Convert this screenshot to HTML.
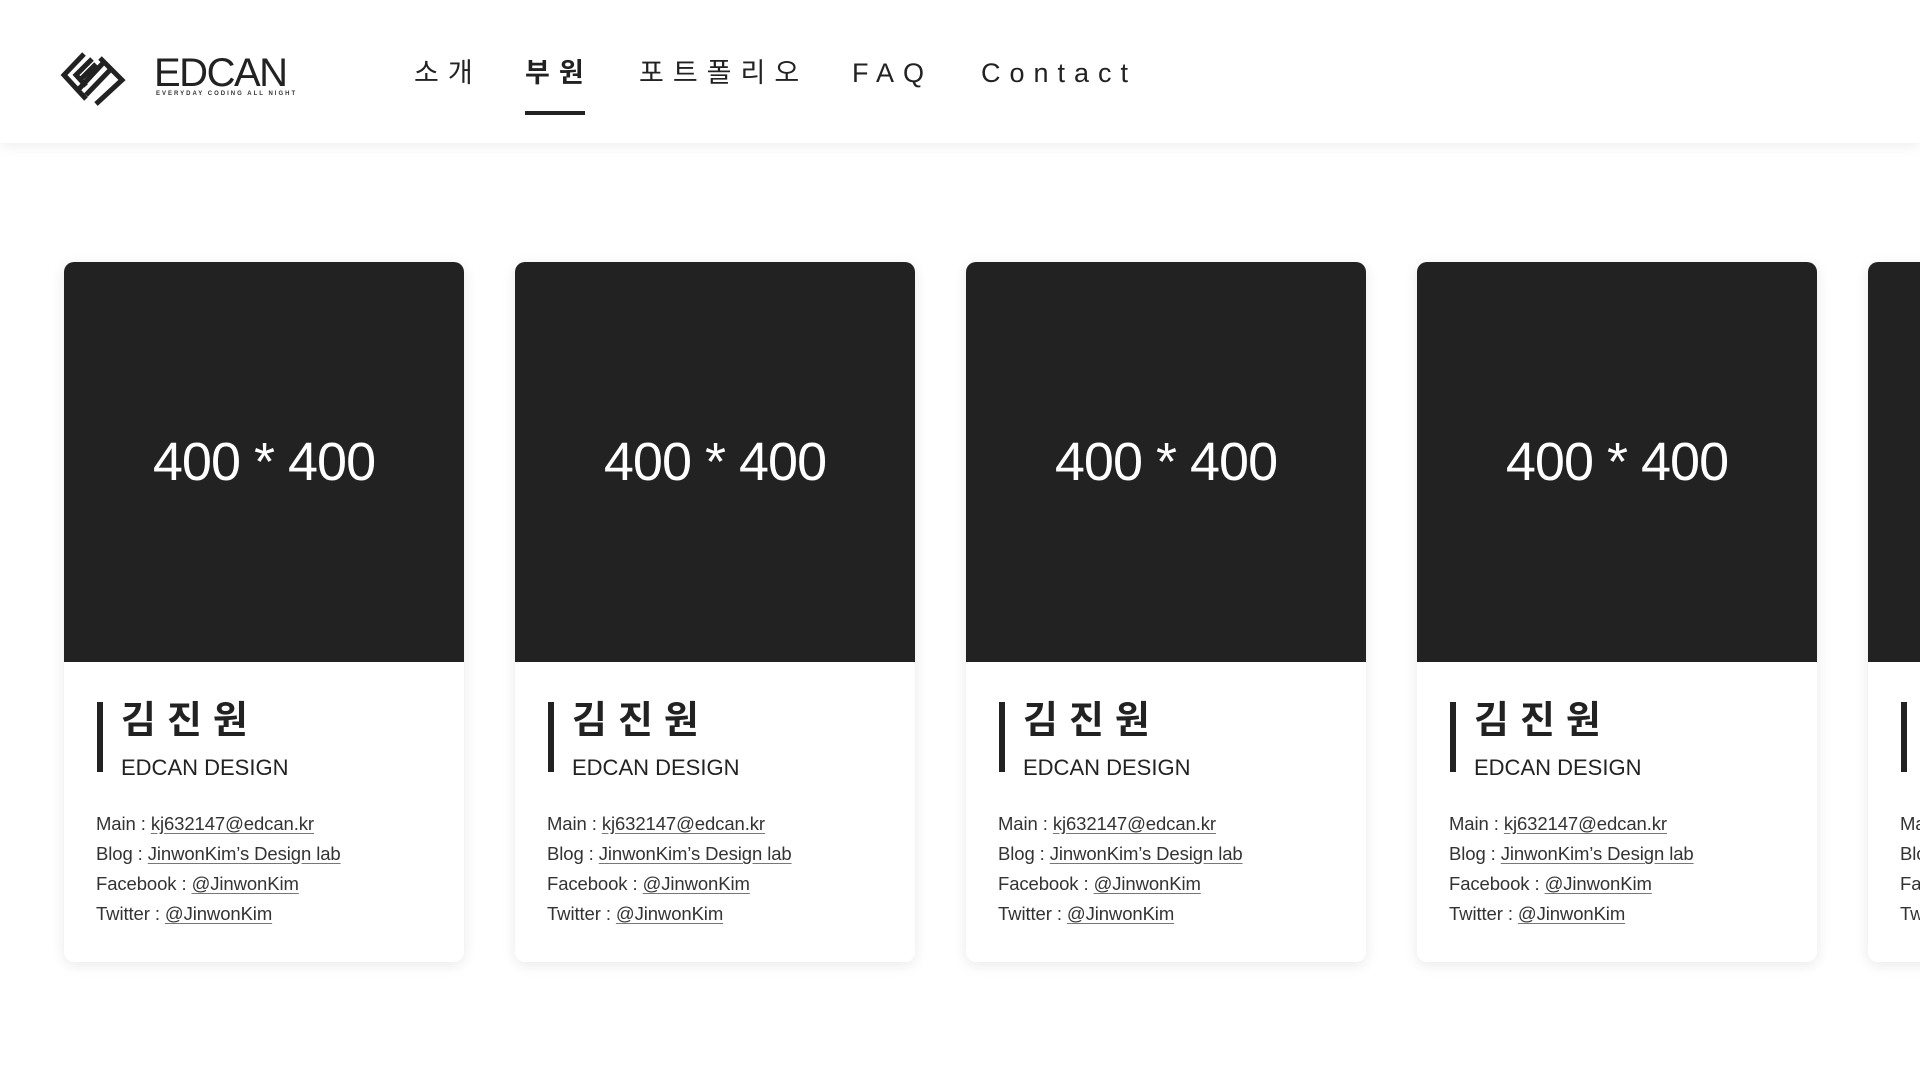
<!DOCTYPE html>
<html><head><meta charset="utf-8"><style>
*{margin:0;padding:0;box-sizing:border-box}
html{overflow:hidden}
body{width:1920px;height:1080px;background:#fff;overflow:hidden;position:relative;font-family:"Liberation Sans","Noto Sans CJK KR",sans-serif;color:#222}
.hdr{position:absolute;left:0;top:0;width:1920px;height:143px;background:#fff;box-shadow:0 2px 14px rgba(0,0,0,.08);z-index:2}
.nav{position:absolute;top:53px;font-size:27px;letter-spacing:9px;color:#222;line-height:40px}
.ul{position:absolute;left:525px;top:111px;width:60px;height:4px;background:#222}
.wrap{position:absolute;left:0;top:0;width:1920px;height:1080px;overflow:hidden}
.card{position:absolute;top:262px;width:400px;height:700px;background:#fff;border-radius:10px;box-shadow:0 3px 14px rgba(0,0,0,.09);overflow:hidden}
.img{height:400px;background:#222;color:#fff;font-size:54px;display:flex;align-items:center;justify-content:center;letter-spacing:-1px}
.bar{position:absolute;left:33px;top:440px;width:6px;height:70px;background:#222}
.nm{position:absolute;left:57px;top:434px;font-size:38px;font-weight:bold;letter-spacing:11px;line-height:50px}
.sub{position:absolute;left:57px;top:491px;font-size:22px;line-height:30px;color:#222}
.info{position:absolute;left:32px;top:547px;font-size:18.5px;line-height:30px;color:#333;letter-spacing:-0.1px}
.info u{text-decoration:underline;text-underline-offset:3px;text-decoration-color:#777}
</style></head><body>
<div class="hdr">
<svg style="position:absolute;left:60px;top:50px" width="66" height="56" viewBox="0 0 66 56">
<g fill="none" stroke="#222" stroke-width="5">
<path d="M24 4 L4 25 L26 49 M32 9 L16 25 L26 36 M36 14 L22 28 M44 12 L18 40 M50 20 L26 45 M40 8 L62 30 L36 54"/>
</g></svg>
<div style="position:absolute;left:154px;top:53px;font-size:40px;line-height:40px;letter-spacing:-1.5px;color:#222">EDCAN</div>
<div style="position:absolute;left:156px;top:91px;font-size:6px;letter-spacing:2px;font-weight:bold;color:#333">EVERYDAY CODING ALL NIGHT</div>
<div class="nav" style="left:414px">소개</div>
<div class="nav" style="left:525px;font-weight:bold">부원</div>
<div class="nav" style="left:639px">포트폴리오</div>
<div class="nav" style="left:852px">FAQ</div>
<div class="nav" style="left:981px">Contact</div>
<div class="ul"></div>
</div>
<div class="wrap">
<div class="card" style="left:64px"><div class="img">400 * 400</div><div class="bar"></div><div class="nm">김진원</div><div class="sub">EDCAN DESIGN</div><div class="info">Main : <u>kj632147@edcan.kr</u><br>Blog : <u>JinwonKim’s Design lab</u><br>Facebook : <u>@JinwonKim</u><br>Twitter : <u>@JinwonKim</u></div></div>
<div class="card" style="left:515px"><div class="img">400 * 400</div><div class="bar"></div><div class="nm">김진원</div><div class="sub">EDCAN DESIGN</div><div class="info">Main : <u>kj632147@edcan.kr</u><br>Blog : <u>JinwonKim’s Design lab</u><br>Facebook : <u>@JinwonKim</u><br>Twitter : <u>@JinwonKim</u></div></div>
<div class="card" style="left:966px"><div class="img">400 * 400</div><div class="bar"></div><div class="nm">김진원</div><div class="sub">EDCAN DESIGN</div><div class="info">Main : <u>kj632147@edcan.kr</u><br>Blog : <u>JinwonKim’s Design lab</u><br>Facebook : <u>@JinwonKim</u><br>Twitter : <u>@JinwonKim</u></div></div>
<div class="card" style="left:1417px"><div class="img">400 * 400</div><div class="bar"></div><div class="nm">김진원</div><div class="sub">EDCAN DESIGN</div><div class="info">Main : <u>kj632147@edcan.kr</u><br>Blog : <u>JinwonKim’s Design lab</u><br>Facebook : <u>@JinwonKim</u><br>Twitter : <u>@JinwonKim</u></div></div>
<div class="card" style="left:1868px"><div class="img">400 * 400</div><div class="bar"></div><div class="nm">김진원</div><div class="sub">EDCAN DESIGN</div><div class="info">Main : <u>kj632147@edcan.kr</u><br>Blog : <u>JinwonKim’s Design lab</u><br>Facebook : <u>@JinwonKim</u><br>Twitter : <u>@JinwonKim</u></div></div>
</div>
</body></html>
